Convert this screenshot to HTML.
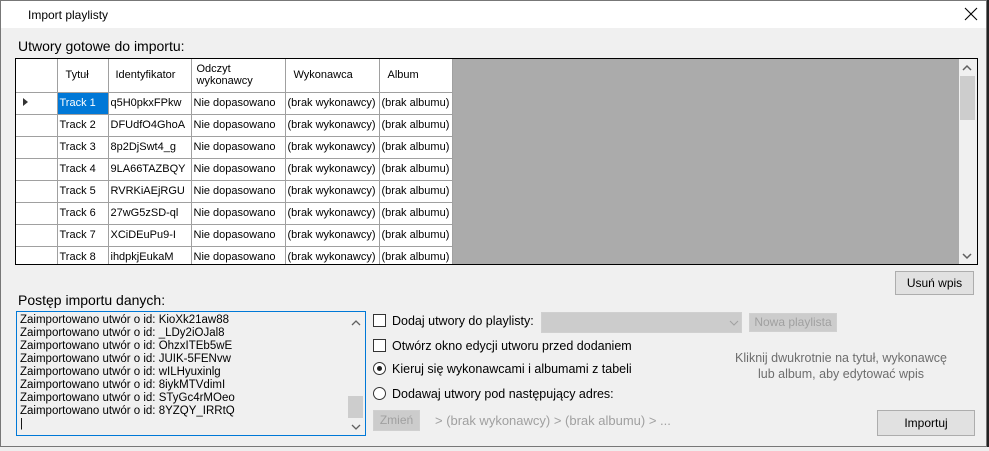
<!DOCTYPE html><html><head><meta charset="utf-8"><style>
*{box-sizing:border-box;margin:0;padding:0}
body{width:989px;height:451px;overflow:hidden;background:#222;font-family:"Liberation Sans",sans-serif;position:relative}
.a{position:absolute}
.win{left:0;top:0;width:987px;height:447px;background:#f0f0f0;border:1px solid #777}
.t{font-size:12px;color:#000;white-space:nowrap}
table{border-collapse:collapse;font-size:11px;table-layout:fixed;width:436px}
td{border:1px solid #a0a0a0;background:#fff;height:22px;padding:0 2px;white-space:nowrap;overflow:hidden}
.btn{border:1px solid #adadad;background:#e1e1e1;font-size:12px;text-align:center}
.dis{border:1px solid #d0d0d0;background:#ccc;color:#a0a0a0}
.cb{width:13px;height:13px;border:1px solid #333;background:#fff}
.rb{width:13px;height:13px;border:1px solid #333;border-radius:50%;background:#fff}
.l{font-size:12.5px}
</style></head><body>
<div class="a" style="left:0;top:447px;width:989px;height:4px;background:#eee"></div>
<div class="a win">
<div class="a" style="left:0;top:0;width:985px;height:27px;background:#fff"></div>
<div class="a t" style="left:27px;top:7px;font-size:12px">Import playlisty</div>
<svg class="a" style="left:963px;top:6px" width="14" height="14"><path d="M1 1L13 13M13 1L1 13" stroke="#000" stroke-width="1.1"/></svg>
<div class="a t" style="left:17px;top:37px;font-size:14px">Utwory gotowe do importu:</div>
<div class="a" style="left:14px;top:57px;width:963px;height:207px;border:1px solid #000;background:#ababab;overflow:hidden">
<table class="a" style="left:0;top:0">
<colgroup><col style="width:41px"><col style="width:51px"><col style="width:83px"><col style="width:94px"><col style="width:94px"><col style="width:73px"></colgroup>
<tr style="height:33px"><td style="border-left:0;border-top:0"></td><td style="padding-left:8px;border-top:0">Tytuł</td><td style="padding-left:7px;border-top:0">Identyfikator</td><td style="line-height:12px;padding-left:5px;border-top:0">Odczyt<br>wykonawcy</td><td style="padding-left:8px;border-top:0">Wykonawca</td><td style="padding-left:8px;border-top:0">Album</td></tr>
<tr><td style="border-left:0"><svg width="8" height="10" style="margin-left:4px"><path d="M1 1L6 5L1 9Z" fill="#333"/></svg></td><td style="background:#0078d7;color:#fff">Track 1</td><td>q5H0pkxFPkw</td><td>Nie dopasowano</td><td>(brak wykonawcy)</td><td>(brak albumu)</td></tr>
<tr><td style="border-left:0"></td><td>Track 2</td><td>DFUdfO4GhoA</td><td>Nie dopasowano</td><td>(brak wykonawcy)</td><td>(brak albumu)</td></tr>
<tr><td style="border-left:0"></td><td>Track 3</td><td>8p2DjSwt4_g</td><td>Nie dopasowano</td><td>(brak wykonawcy)</td><td>(brak albumu)</td></tr>
<tr><td style="border-left:0"></td><td>Track 4</td><td>9LA66TAZBQY</td><td>Nie dopasowano</td><td>(brak wykonawcy)</td><td>(brak albumu)</td></tr>
<tr><td style="border-left:0"></td><td>Track 5</td><td>RVRKiAEjRGU</td><td>Nie dopasowano</td><td>(brak wykonawcy)</td><td>(brak albumu)</td></tr>
<tr><td style="border-left:0"></td><td>Track 6</td><td>27wG5zSD-ql</td><td>Nie dopasowano</td><td>(brak wykonawcy)</td><td>(brak albumu)</td></tr>
<tr><td style="border-left:0"></td><td>Track 7</td><td>XCiDEuPu9-I</td><td>Nie dopasowano</td><td>(brak wykonawcy)</td><td>(brak albumu)</td></tr>
<tr><td style="border-left:0"></td><td>Track 8</td><td>ihdpkjEukaM</td><td>Nie dopasowano</td><td>(brak wykonawcy)</td><td>(brak albumu)</td></tr>
</table>
<div class="a" style="left:943px;top:0;width:18px;height:205px;background:#f0f0f0"></div>
<div class="a" style="left:944px;top:17px;width:15px;height:44px;background:#cdcdcd"></div>
<svg class="a" style="left:946px;top:5px" width="10" height="8"><path d="M1 6L5 2L9 6" stroke="#606060" stroke-width="1.5" fill="none"/></svg>
<svg class="a" style="left:946px;top:193px" width="10" height="8"><path d="M1 2L5 6L9 2" stroke="#606060" stroke-width="1.5" fill="none"/></svg>
</div>
<div class="a btn" style="left:894px;top:270px;width:79px;height:24px;line-height:22px">Usuń wpis</div>
<div class="a t" style="left:17px;top:291px;font-size:14px">Postęp importu danych:</div>
<div class="a" style="left:15px;top:310px;width:350px;height:125px;border:1px solid #0078d7;background:#f0f0f0">
<div class="a t" style="left:3px;top:2px;line-height:13px;font-size:11.5px">Zaimportowano utwór o id: KioXk21aw88<br>Zaimportowano utwór o id: _LDy2iOJal8<br>Zaimportowano utwór o id: OhzxITEb5wE<br>Zaimportowano utwór o id: JUIK-5FENvw<br>Zaimportowano utwór o id: wILHyuxinlg<br>Zaimportowano utwór o id: 8iykMTVdimI<br>Zaimportowano utwór o id: STyGc4rMOeo<br>Zaimportowano utwór o id: 8YZQY_IRRtQ<br>|</div>
<div class="a" style="left:331px;top:84px;width:15px;height:22px;background:#cdcdcd"></div>
<svg class="a" style="left:334px;top:7px" width="10" height="8"><path d="M1 6L5 2L9 6" stroke="#606060" stroke-width="1.3" fill="none"/></svg>
<svg class="a" style="left:334px;top:111px" width="10" height="8"><path d="M1 2L5 6L9 2" stroke="#606060" stroke-width="1.3" fill="none"/></svg>
</div>
<div class="a cb" style="left:372px;top:313px"></div>
<div class="a t l" style="left:391px;top:313px">Dodaj utwory do playlisty:</div>
<div class="a dis" style="left:540px;top:311px;width:201px;height:21px"><svg class="a" style="left:187px;top:7px" width="10" height="6"><path d="M1 1L5 5L9 1" stroke="#a0a0a0" fill="none"/></svg></div>
<div class="a btn dis" style="left:748px;top:312px;width:88px;height:19px;line-height:17px">Nowa playlista</div>
<div class="a cb" style="left:372px;top:338px"></div>
<div class="a t l" style="left:391px;top:338px">Otwórz okno edycji utworu przed dodaniem</div>
<div class="a rb" style="left:372px;top:361px"><div class="a" style="left:3px;top:3px;width:5px;height:5px;border-radius:50%;background:#222"></div></div>
<div class="a t l" style="left:391px;top:361px">Kieruj się wykonawcami i albumami z tabeli</div>
<div class="a rb" style="left:372px;top:386px"></div>
<div class="a t l" style="left:391px;top:386px">Dodawaj utwory pod następujący adres:</div>
<div class="a t" style="left:700px;top:349px;width:280px;text-align:center;line-height:16px;color:#6d6d6d;font-size:12.5px">Kliknij dwukrotnie na tytuł, wykonawcę<br>lub album, aby edytować wpis</div>
<div class="a btn dis" style="left:372px;top:409px;width:47px;height:21px;line-height:19px">Zmień</div>
<div class="a t" style="left:434px;top:412px;color:#a0a0a0;font-size:13px">&gt; (brak wykonawcy) &gt; (brak albumu) &gt; ...</div>
<div class="a btn" style="left:876px;top:409px;width:98px;height:26px;line-height:24px">Importuj</div>
</div>
</body></html>
